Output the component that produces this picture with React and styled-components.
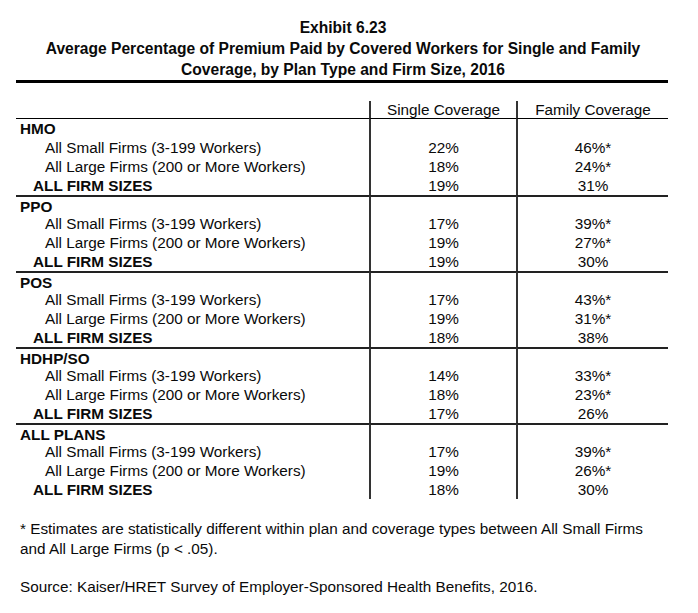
import React from 'react';
import styled, { createGlobalStyle } from 'styled-components';

const GlobalStyle = createGlobalStyle`
  html, body {
    margin: 0;
    padding: 0;
    background: #fff;
  }
  body {
    font-family: "Liberation Sans", Arial, sans-serif;
    color: #0a0a0a;
  }
`;

const Page = styled.div`
  width: 698px;
  height: 613px;
  box-sizing: border-box;
  padding: 17px 30px 0 16px;
`;

const Title = styled.div`
  text-align: center;
  font-weight: bold;
  font-size: 15.6px;
  line-height: 21px;
  padding-left: 2px;
`;

const Rule = styled.div`
  height: 3px;
  background: #000;
`;

const Table = styled.div`
  margin-top: 18px;
  display: grid;
  grid-template-columns: 353px 147px 1fr;
  font-size: 15.3px;
`;

const HeaderCell = styled.div`
  height: 18px;
  line-height: 17px;
  text-align: center;
  border-bottom: 1px solid #000;
  border-left: ${p => (p.$divider ? '2px solid #333' : 'none')};
  box-sizing: border-box;
`;

const Section = styled.div`
  display: contents;
`;

const Cell = styled.div`
  height: 19px;
  line-height: 19px;
  box-sizing: border-box;
  white-space: nowrap;
  padding-left: ${p => p.$indent || 0}px;
  font-weight: ${p => (p.$bold ? 'bold' : 'normal')};
  text-align: ${p => (p.$value ? 'center' : 'left')};
  border-left: ${p => (p.$value ? '2px solid #333' : 'none')};
  border-top: ${p => (p.$top ? '2px solid #222' : 'none')};
`;

const Notes = styled.div`
  margin-top: 20px;
  padding-left: 4px;
  font-size: 15.3px;
  line-height: 20px;
`;

const Source = styled.p`
  margin: 18px 0 0;
`;

const plans = [
  { name: 'HMO', rows: [['22%', '46%*'], ['18%', '24%*'], ['19%', '31%']] },
  { name: 'PPO', rows: [['17%', '39%*'], ['19%', '27%*'], ['19%', '30%']] },
  { name: 'POS', rows: [['17%', '43%*'], ['19%', '31%*'], ['18%', '38%']] },
  { name: 'HDHP/SO', rows: [['14%', '33%*'], ['18%', '23%*'], ['17%', '26%']] },
  { name: 'ALL PLANS', rows: [['17%', '39%*'], ['19%', '26%*'], ['18%', '30%']] },
];

const labels = [
  { text: 'All Small Firms (3-199 Workers)', indent: 29 },
  { text: 'All Large Firms (200 or More Workers)', indent: 29 },
  { text: 'ALL FIRM SIZES', indent: 17, bold: true },
];

const App = () => (
  <Page>
    <GlobalStyle />
    <Title>
      Exhibit 6.23
      <br />
      Average Percentage of Premium Paid by Covered Workers for Single and Family
      <br />
      Coverage, by Plan Type and Firm Size, 2016
    </Title>
    <Rule />
    <Table>
      <HeaderCell />
      <HeaderCell $divider>Single Coverage</HeaderCell>
      <HeaderCell $divider>Family Coverage</HeaderCell>
      {plans.map((plan, i) => (
        <Section key={plan.name}>
          <Cell $bold $indent={4} $top={i > 0}>{plan.name}</Cell>
          <Cell $value $top={i > 0} />
          <Cell $value $top={i > 0} />
          {plan.rows.map((vals, j) => (
            <Section key={j}>
              <Cell $indent={labels[j].indent} $bold={labels[j].bold}>
                {labels[j].text}
              </Cell>
              <Cell $value>{vals[0]}</Cell>
              <Cell $value>{vals[1]}</Cell>
            </Section>
          ))}
        </Section>
      ))}
    </Table>
    <Notes>
      * Estimates are statistically different within plan and coverage types between All Small Firms
      <br />
      and All Large Firms (p &lt; .05).
      <Source>Source: Kaiser/HRET Survey of Employer-Sponsored Health Benefits, 2016.</Source>
    </Notes>
  </Page>
);

export default App;
